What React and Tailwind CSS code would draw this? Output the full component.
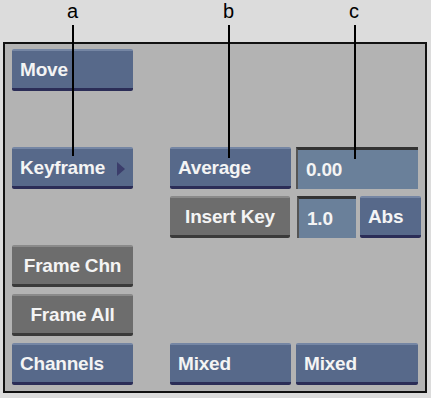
import React from "react";

const font = { fontFamily: '"Liberation Sans", Arial, sans-serif' };

const BlueButton = ({ children, className = "" }) => (
  <div
    className={`flex h-[42px] items-center rounded-[2px] border-t-2 border-b-[3px] border-t-[#7586a4] border-b-[#2b2d57] bg-[#57698a] px-2 pt-[2px] text-[19px] font-bold tracking-[-0.2px] text-[#f4f4f4] ${className}`}
  >
    {children}
  </div>
);

const GrayButton = ({ children, className = "" }) => (
  <div
    className={`flex h-[42px] items-center justify-center rounded-[2px] border-t-2 border-b-[3px] border-t-[#8a8a8a] border-b-[#3a3a3a] bg-[#6d6d6d] px-2 pt-[2px] text-[19px] font-bold tracking-[-0.2px] text-[#f4f4f4] ${className}`}
  >
    {children}
  </div>
);

const Field = ({ children, className = "" }) => (
  <div
    className={`flex h-[42px] items-center border-t-[3px] border-l-2 border-t-[#333] border-l-[#555] bg-[#6a809a] px-2 pt-[1px] text-[19px] font-bold tracking-[-0.2px] text-[#f4f4f4] ${className}`}
  >
    {children}
  </div>
);

export default function App() {
  return (
    <div className="relative h-[398px] w-[431px] bg-[#dcdcdc]" style={font}>
      {/* callout labels */}
      <div className="relative h-[42px] text-[20px] text-black">
        <span className="absolute left-[67px] top-[-4px]">a</span>
        <span className="absolute left-[223px] top-[-4px]">b</span>
        <span className="absolute left-[349px] top-[-4px]">c</span>
      </div>

      {/* panel */}
      <div className="ml-[3px] h-[351px] w-[424px] border-2 border-[#111] bg-[#b3b3b3] pl-[7px] pt-[5px]">
        <div className="flex flex-col gap-[7px]">
          <div className="flex">
            <BlueButton className="w-[121px]">Move</BlueButton>
          </div>
          <div className="h-[42px]" />
          <div className="flex">
            <BlueButton className="w-[121px] justify-between">
              <span>Keyframe</span>
              <span className="h-0 w-0 border-y-[7px] border-l-[8px] border-y-transparent border-l-[#3b3d6b]" />
            </BlueButton>
            <BlueButton className="ml-[37px] w-[121px]">Average</BlueButton>
            <Field className="ml-[5px] w-[122px]">0.00</Field>
          </div>
          <div className="flex">
            <div className="w-[158px]" />
            <GrayButton className="w-[120px]">Insert Key</GrayButton>
            <Field className="ml-[7px] w-[59px]">1.0</Field>
            <BlueButton className="ml-[4px] w-[61px]">Abs</BlueButton>
          </div>
          <div className="flex">
            <GrayButton className="w-[121px]">Frame Chn</GrayButton>
          </div>
          <div className="flex">
            <GrayButton className="w-[121px]">Frame All</GrayButton>
          </div>
          <div className="flex">
            <BlueButton className="w-[121px]">Channels</BlueButton>
            <BlueButton className="ml-[37px] w-[121px]">Mixed</BlueButton>
            <BlueButton className="ml-[5px] w-[122px]">Mixed</BlueButton>
          </div>
        </div>
      </div>

      {/* callout lines */}
      <div className="absolute left-[72px] top-[25px] h-[131px] w-[2px] bg-black" />
      <div className="absolute left-[228px] top-[25px] h-[133px] w-[2px] bg-black" />
      <div className="absolute left-[354px] top-[25px] h-[134px] w-[2px] bg-black" />
    </div>
  );
}
